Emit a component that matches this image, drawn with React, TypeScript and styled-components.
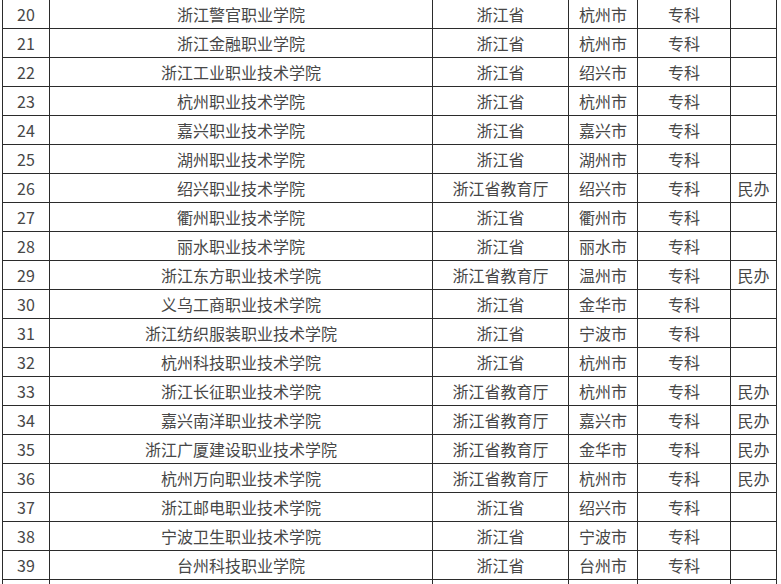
import React from 'react';
import styled, { createGlobalStyle } from 'styled-components';

const GlobalStyle = createGlobalStyle`
  html, body {
    margin: 0;
    padding: 0;
    background: #fff;
    overflow: hidden;
  }
  body {
    font-family: "Noto Sans CJK SC", "Noto Sans", sans-serif;
  }
`;

const Wrap = styled.div`
  padding-left: 2px;
  margin-top: -1px;
`;

const Table = styled.table`
  border-collapse: collapse;
  table-layout: fixed;
  width: 775px;
  color: #474747;
  font-size: 16px;
`;

const Row = styled.tr``;

const Cell = styled.td`
  border: 1px solid #2b2b2b;
  height: 28px;
  padding: 0;
  text-align: center;
  vertical-align: middle;
  line-height: 28px;
  white-space: nowrap;
  overflow: hidden;
`;

type School = [number, string, string, string, string, string];

const schools: School[] = [
  [20, '浙江警官职业学院', '浙江省', '杭州市', '专科', ''],
  [21, '浙江金融职业学院', '浙江省', '杭州市', '专科', ''],
  [22, '浙江工业职业技术学院', '浙江省', '绍兴市', '专科', ''],
  [23, '杭州职业技术学院', '浙江省', '杭州市', '专科', ''],
  [24, '嘉兴职业技术学院', '浙江省', '嘉兴市', '专科', ''],
  [25, '湖州职业技术学院', '浙江省', '湖州市', '专科', ''],
  [26, '绍兴职业技术学院', '浙江省教育厅', '绍兴市', '专科', '民办'],
  [27, '衢州职业技术学院', '浙江省', '衢州市', '专科', ''],
  [28, '丽水职业技术学院', '浙江省', '丽水市', '专科', ''],
  [29, '浙江东方职业技术学院', '浙江省教育厅', '温州市', '专科', '民办'],
  [30, '义乌工商职业技术学院', '浙江省', '金华市', '专科', ''],
  [31, '浙江纺织服装职业技术学院', '浙江省', '宁波市', '专科', ''],
  [32, '杭州科技职业技术学院', '浙江省', '杭州市', '专科', ''],
  [33, '浙江长征职业技术学院', '浙江省教育厅', '杭州市', '专科', '民办'],
  [34, '嘉兴南洋职业技术学院', '浙江省教育厅', '嘉兴市', '专科', '民办'],
  [35, '浙江广厦建设职业技术学院', '浙江省教育厅', '金华市', '专科', '民办'],
  [36, '杭州万向职业技术学院', '浙江省教育厅', '杭州市', '专科', '民办'],
  [37, '浙江邮电职业技术学院', '浙江省', '绍兴市', '专科', ''],
  [38, '宁波卫生职业技术学院', '浙江省', '宁波市', '专科', ''],
  [39, '台州科技职业学院', '浙江省', '台州市', '专科', ''],
];

const widths = [47, 383, 136, 69, 93, 46];

const App = () => {
  return (
    <>
      <GlobalStyle />
      <Wrap>
        <Table>
          <colgroup>
            {widths.map((w, i) => (
              <col key={i} style={{ width: w }} />
            ))}
          </colgroup>
          <tbody>
            {schools.map((s) => (
              <Row key={s[0]}>
                {s.map((v, i) => (
                  <Cell key={i}>{v}</Cell>
                ))}
              </Row>
            ))}
            <Row>
              {widths.map((_, i) => (
                <Cell key={i} />
              ))}
            </Row>
          </tbody>
        </Table>
      </Wrap>
    </>
  );
};

export default App;
